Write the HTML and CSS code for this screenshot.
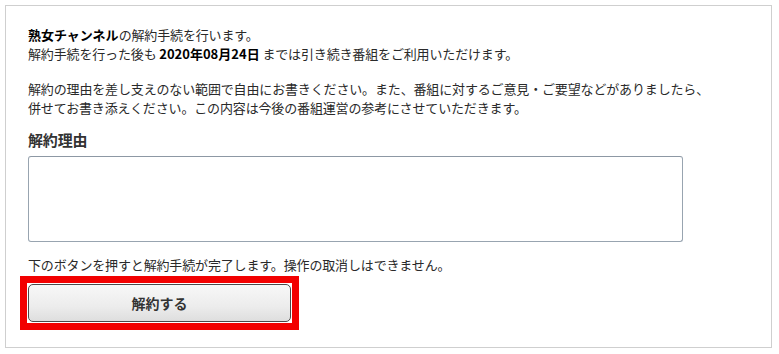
FILE: index.html
```html
<!DOCTYPE html>
<html lang="ja">
<head>
    <meta charset="UTF-8">
    <meta name="viewport" content="width=device-width, initial-scale=1.0">
    <title>解約手続</title>
    <link rel="stylesheet" href="styles.css">
</head>
<body>
    <div class="cancel-box">
        <p class="intro">
            <strong>熟女チャンネル</strong>の解約手続を行います。<br>
            解約手続を行った後も <strong>2020年08月24日</strong> までは引き続き番組をご利用いただけます。
        </p>
        <p class="intro">
            解約の理由を差し支えのない範囲で自由にお書きください。また、番組に対するご意見・ご要望などがありましたら、<br>
            併せてお書き添えください。この内容は今後の番組運営の参考にさせていただきます。
        </p>

        <h2 class="reason-title">解約理由</h2>
        <textarea class="reason-input"></textarea>

        <p class="notice">下のボタンを押すと解約手続が完了します。操作の取消しはできません。</p>

        <div class="highlight">
            <button class="cancel-btn" type="button">解約する</button>
        </div>
    </div>
</body>
</html>
```

FILE: styles.css
```css
* {
    margin: 0;
    padding: 0;
    box-sizing: border-box;
}

body {
    font-family: "Noto Sans CJK JP", "Noto Sans", sans-serif;
    font-size: 13px;
    line-height: 19px;
    letter-spacing: -0.15px;
    color: #2a2a2a;
    background: #fff;
    padding: 5px;
}

.cancel-box {
    width: 767px;
    height: 343px;
    border: 1px solid #cfcfcf;
    padding: 19px 22px 0;
}

.intro {
    margin-bottom: 16px;
}

.intro strong {
    color: #000;
    font-weight: bold;
    letter-spacing: 0;
}

.reason-title {
    font-size: 15px;
    line-height: 20px;
    font-weight: bold;
    color: #333;
    margin-top: -3px;
    margin-bottom: 6px;
}

.reason-input {
    display: block;
    width: 655px;
    height: 86px;
    border: 1px solid #98a4b0;
    border-top-color: #8d98a4;
    border-radius: 3px;
    background: #fff;
    resize: none;
    font-family: inherit;
}

.notice {
    margin-top: 13px;
    margin-bottom: 2px;
}

.highlight {
    display: inline-block;
    border: 7px solid #f20000;
    padding: 1px;
    margin-left: -8px;
    background: #fff;
}

.cancel-btn {
    display: block;
    width: 263px;
    height: 38px;
    border: 1px solid #4a4a4a;
    border-radius: 5px;
    background: linear-gradient(#f7f7f7 0%, #ececec 60%, #dedede 100%);
    font-family: inherit;
    font-size: 14px;
    font-weight: bold;
    color: #333;
    cursor: pointer;
}
```
